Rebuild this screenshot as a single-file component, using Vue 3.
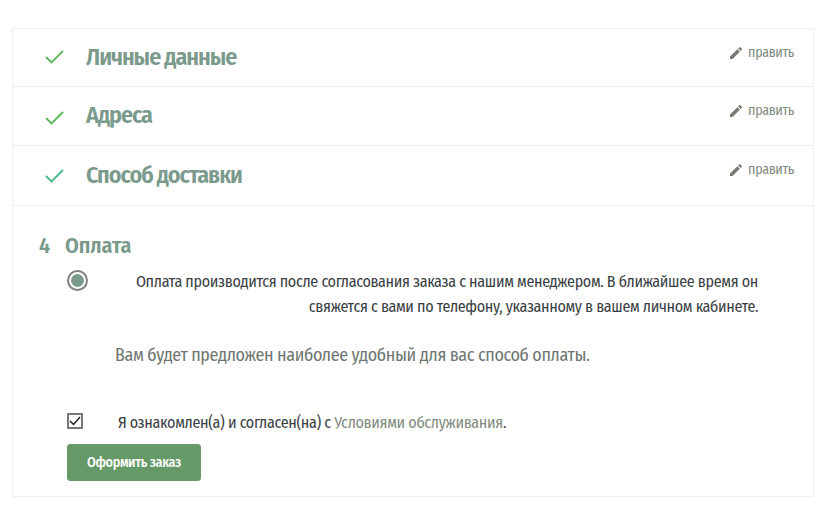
<script setup>
const steps = [
  { title: 'Личные данные', color: '#5cb85c' },
  { title: 'Адреса', color: '#5cb85c' },
  { title: 'Способ доставки', color: '#45b88a' },
]
</script>

<template>
  <div class="page">
    <div class="card">
      <section v-for="s in steps" :key="s.title" class="step">
        <svg class="check" width="20" height="14" viewBox="0 0 20 14" fill="none">
          <path d="M2 7l5.5 5.5L19 1" :stroke="s.color" stroke-width="1.8" />
        </svg>
        <h2 class="step-title">{{ s.title }}</h2>
        <a class="edit">
          <svg width="16" height="16" viewBox="0 0 24 24" fill="#7a7a72">
            <path d="M3 17.25V21h3.75L17.81 9.94l-3.75-3.75L3 17.25zM20.71 7.04a1 1 0 0 0 0-1.41l-2.34-2.34a1 1 0 0 0-1.41 0l-1.83 1.83 3.75 3.75 1.83-1.83z" />
          </svg>
          <span>править</span>
        </a>
      </section>
      <section class="current">
        <h2 class="current-title"><span class="num">4</span><span>Оплата</span></h2>
        <div class="option">
          <span class="radio"><span class="dot"></span></span>
          <p class="note">Оплата производится после согласования заказа с нашим менеджером. В ближайшее время он свяжется с вами по телефону, указанному в вашем личном кабинете.</p>
        </div>
        <p class="offer">Вам будет предложен наиболее удобный для вас способ оплаты.</p>
        <div class="terms">
          <span class="box">
            <svg width="12" height="10" viewBox="0 0 12 10" fill="none"><path d="M1 5l3.5 3.5L11 1" stroke="#222" stroke-width="1.5" /></svg>
          </span>
          <span class="terms-text">Я ознакомлен(а) и согласен(на) с <a>Условиями обслуживания</a>.</span>
        </div>
        <button class="submit">Оформить заказ</button>
      </section>
    </div>
  </div>
</template>

<style scoped>
.page {
  width: 826px;
  height: 514px;
  padding: 28px 12px 0;
  box-sizing: border-box;
  background: #fff;
  font-family: "Fira Sans Condensed", "Roboto Condensed", "Open Sans", sans-serif;
}
.card {
  width: 802px;
  height: 469px;
  box-sizing: border-box;
  border: 1px solid #f0f0f0;
}
.step {
  height: 59px;
  box-sizing: border-box;
  border-bottom: 1px solid #eeeeee;
  display: flex;
  align-items: flex-start;
  padding: 0 19px 0 31px;
}
.step:nth-child(1) { height: 58px; }
.step:nth-child(3) { height: 60px; }
.check { margin-top: 21px; }
.step:nth-child(2) .check { margin-top: 24px; }
.step:nth-child(3) .check { margin-top: 23px; }
.step-title {
  margin: 13px 0 0 22px;
  font-size: 24px;
  letter-spacing: -1.05px;
  line-height: 30px;
  font-weight: 600;
  color: #7a9a8c;
  flex: 1;
}
.step:nth-child(3) .step-title { margin-top: 14px; }
.edit {
  display: flex;
  align-items: center;
  gap: 4px;
  margin-top: 15px;
  font-size: 14px;
  letter-spacing: -0.35px;
  line-height: 18px;
  color: #7f8c80;
}
.current { padding: 27px 0 0 26px; }
.current-title {
  margin: 0;
  display: flex;
  gap: 15px;
  font-size: 22px;
  letter-spacing: -0.1px;
  line-height: 26px;
  font-weight: 600;
  color: #7a9a8c;
}
.option {
  display: flex;
  margin: 10px 0 0 28px;
  width: 691px;
}
.radio {
  flex: none;
  width: 21px;
  height: 21px;
  margin-top: 1px;
  box-sizing: border-box;
  border: 2px solid #808080;
  border-radius: 50%;
  display: flex;
  align-items: center;
  justify-content: center;
}
.dot {
  width: 13px;
  height: 13px;
  border-radius: 50%;
  background: #7a9a8c;
}
.note {
  margin: 0;
  flex: 1;
  text-align: right;
  font-size: 16px;
  letter-spacing: -0.33px;
  line-height: 25px;
  color: #3a3f45;
}
.offer {
  margin: 23px 0 0 76px;
  font-size: 18px;
  letter-spacing: -0.38px;
  line-height: 26px;
  color: #6f7772;
}
.terms {
  display: flex;
  margin: 45px 0 0 28px;
  height: 31px;
}
.box {
  width: 16px;
  height: 16px;
  box-sizing: border-box;
  border: 2px solid #777;
  display: flex;
  align-items: center;
  justify-content: center;
}
.terms-text {
  margin: 0 0 0 35px;
  font-size: 16px;
  letter-spacing: -0.33px;
  line-height: 20px;
  color: #3a3f45;
}
.terms-text a { color: #7f8c80; }
.submit {
  display: block;
  margin-left: 28px;
  width: 134px;
  height: 37px;
  border: 1px solid #6a9a6c;
  border-radius: 3px;
  background: #659a68;
  color: #fff;
  font-family: inherit;
  font-size: 14px;
  letter-spacing: -0.35px;
  font-weight: 500;
}
</style>
